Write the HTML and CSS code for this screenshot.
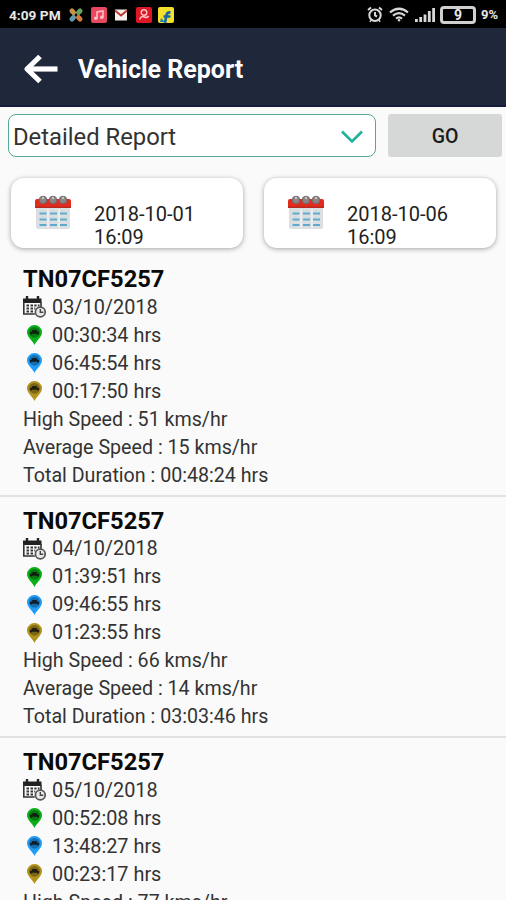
FILE: index.html
```html
<!DOCTYPE html>
<html lang="en">
<head>
    <meta charset="UTF-8">
    <meta name="viewport" content="width=device-width, initial-scale=1.0">
    <title>Vehicle Report</title>
    <link rel="stylesheet" href="styles.css">
</head>
<body>
    <!-- Shared icons -->
    <svg class="sprite" width="0" height="0">
        <defs>
            <symbol id="calendar" viewBox="0 0 36 36">
                <path d="M1 13h34v19q0 2-2 2H3q-2 0-2-2z" fill="#dcdfe2"/>
                <path d="M13 14v19M24 14v19" stroke="#eef1f3" stroke-width="1.5"/>
                <path d="M0 6q0-2 2-2h32q2 0 2 2v7H0z" fill="#e32b1c"/>
                <path d="M0 11.500h36v1.500H0z" fill="#b82a20"/>
                <g fill="#8d8385" stroke="#6f696c"><circle cx="8" cy="5" r="3.800"/><circle cx="18" cy="5" r="3.800"/><circle cx="28" cy="5" r="3.800"/></g>
                <g fill="#c9c4c6"><circle cx="8" cy="3" r="1.200"/><circle cx="18" cy="3" r="1.200"/><circle cx="28" cy="3" r="1.200"/></g>
                <path d="M4.500 18.500h7M15 18.500h7M25 18.500h7M4.500 24.500h7M15 24.500h7M25 24.500h7M4.500 30h7M15 30h7M25 30h7" stroke="#5fa9cc" stroke-width="2"/>
                <path d="M6 17h4M16 17h4M26 17h4M6 23h4M16 23h4M26 23h4" stroke="#a8d8dc"/>
            </symbol>
            <symbol id="schedule" viewBox="0 0 23 22">
                <path d="M0 2.500h18.500V7H0z" fill="#222"/>
                <path d="M4 0v4M15 0v4" stroke="#222" stroke-width="2.400"/>
                <path d="M.8 6v12h11M18 6v5" fill="none" stroke="#333" stroke-width="1.600"/>
                <path d="M3.500 9.500h2.500M7.500 9.500h2.500M11.300 9.500h2.200M14.800 9.500h1.700M3.500 12.500h2.500M7.500 12.500h2.500M11.300 12.500h1M3.500 15.500h2.500M7.500 15.500h2.500" stroke="#333" stroke-width="2"/>
                <circle cx="17.300" cy="16" r="4.900" fill="#e9e9e9" stroke="#555" stroke-width="1.700"/>
                <path d="M17.300 13v3.300h3" fill="none" stroke="#444" stroke-width="1.400"/>
            </symbol>
            <symbol id="pin" viewBox="0 0 16 20">
                <path d="M8 20C6 15.500.5 12 .5 7.300a7.500 7.300 0 0 1 15 0C15.500 12 10 15.500 8 20z" fill="currentColor"/>
                <circle cx="8" cy="7.300" r="5.400" fill="#000" opacity=".3"/>
                <path d="M3.500 9.500V7.300L5 6.800 6 5h4l1 1.800 1.500.5v2.200h-1.700v-.8H5.200v.8z" fill="#111" opacity=".85"/>
            </symbol>
        </defs>
    </svg>

    <div class="screen">
        <div class="statusbar">
            <span class="clock">4:09 PM</span>
            <div class="apps">
                <svg width="16" height="16" viewBox="0 0 16 16">
                    <g stroke-width="5" stroke-linecap="round">
                        <path d="M4 4l1.500 1.500" stroke="#c8924a"/><path d="M12 4l-1.500 1.500" stroke="#68a35a"/>
                        <path d="M4 12l1.500-1.500" stroke="#5c9ab0"/><path d="M12 12l-1.500-1.500" stroke="#d57a3b"/>
                    </g>
                    <path d="M2 8h2M12 8h2M8 2v2M8 12v2" stroke="#000" stroke-width="1.500"/>
                </svg>
                <svg width="16" height="16" viewBox="0 0 16 16">
                    <rect width="16" height="16" rx="2" fill="#e8475f"/>
                    <path d="M6 11V5l6-1v6" fill="none" stroke="#ffc2c8" stroke-width="1.500"/>
                    <circle cx="4.800" cy="11.200" r="1.800" fill="#ffc2c8"/><circle cx="10.800" cy="10.200" r="1.800" fill="#ffc2c8"/>
                </svg>
                <svg width="16" height="16" viewBox="0 0 16 16">
                    <rect x="2" y="2.500" width="12" height="11" fill="#f5efed"/>
                    <path d="M2 3.500l6 5 6-5" fill="none" stroke="#b93730" stroke-width="1.800"/>
                </svg>
                <svg width="16" height="16" viewBox="0 0 16 16">
                    <rect width="16" height="16" rx="2" fill="#df1724"/>
                    <circle cx="8" cy="5.500" r="2.800" fill="none" stroke="#ffc6c8" stroke-width="1.400"/>
                    <path d="M3.500 12.500q2-4 5-2.500 2.500 1.500 4-1" fill="none" stroke="#ffc6c8" stroke-width="1.500"/>
                </svg>
                <svg width="16" height="16" viewBox="0 0 16 16">
                    <rect width="16" height="16" rx="2" fill="#f5e02c"/>
                    <path d="M7 16l1.500-8q.7-3 4-2.500M5.500 9.500h7" fill="none" stroke="#1767a8" stroke-width="2.600"/>
                    <path d="M3 11l4 4H2z" fill="#1d83b5"/>
                </svg>
            </div>
            <div class="indicators">
                <svg width="16" height="17" viewBox="0 0 16 17" fill="none" stroke="#d8d8d8" stroke-width="2">
                    <circle cx="8" cy="9.200" r="5.700"/>
                    <path d="M8 6v3.500l2 1M1 4l3-2.500M15 4l-3-2.500"/>
                    <path d="M4 14l-1 2M12 14l1 2" stroke-width="1.500"/>
                </svg>
                <svg width="20" height="15" viewBox="0 0 20 15" fill="none" stroke="#d8d8d8" stroke-width="2.200">
                    <path d="M1 5.500Q10-2 19 5.500"/><path d="M4 8.700q6-5 12 0"/><path d="M7 11.700q3-2.500 6 0"/>
                    <circle cx="10" cy="13.300" r="1.200" fill="#d8d8d8" stroke="none"/>
                </svg>
                <svg width="20" height="15" viewBox="0 0 20 15" fill="#d8d8d8">
                    <path d="M0 12h2.800v3H0zM4.300 10h2.800v5H4.300zM8.600 7.500h2.800V15H8.600zM12.900 4h2.800v11h-2.800zM17.200 1H20v14h-2.800z"/>
                </svg>
                <div class="battery">9</div>
                <span class="percent">9%</span>
            </div>
        </div>

        <div class="header">
            <svg width="35" height="30" viewBox="0 0 35 30" fill="none" stroke="#fff" stroke-width="5.200">
                <path d="M4 15h30.500"/><path d="M17 2.500L4 15l13 12.500" stroke-linejoin="round"/>
            </svg>
            <h1>Vehicle Report</h1>
        </div>

        <div class="filters">
            <div class="select">
                <span>Detailed Report</span>
                <svg width="24" height="14" viewBox="0 0 24 14" fill="none" stroke="#20b09c" stroke-width="2.600">
                    <path d="M2 1.500l10 10 10-10"/>
                </svg>
            </div>
            <button type="button" class="go">GO</button>
        </div>

        <div class="dates">
            <div class="date-card">
                <svg width="36" height="36"><use href="#calendar"/></svg>
                <span>2018-10-01 16:09</span>
            </div>
            <div class="date-card">
                <svg width="36" height="36"><use href="#calendar"/></svg>
                <span>2018-10-06 16:09</span>
            </div>
        </div>

        <!-- Report list -->
        <div class="record">
            <h2>TN07CF5257</h2>
            <div class="row"><svg width="23" height="22"><use href="#schedule"/></svg>03/10/2018</div>
            <div class="row"><svg class="green" width="23" height="20"><use href="#pin"/></svg>00:30:34 hrs</div>
            <div class="row"><svg class="blue" width="23" height="20"><use href="#pin"/></svg>06:45:54 hrs</div>
            <div class="row"><svg class="gold" width="23" height="20"><use href="#pin"/></svg>00:17:50 hrs</div>
            <div class="row stat">High Speed : 51 kms/hr</div>
            <div class="row stat">Average Speed : 15 kms/hr</div>
            <div class="row stat">Total Duration : 00:48:24 hrs</div>
        </div>
        <div class="record">
            <h2>TN07CF5257</h2>
            <div class="row"><svg width="23" height="22"><use href="#schedule"/></svg>04/10/2018</div>
            <div class="row"><svg class="green" width="23" height="20"><use href="#pin"/></svg>01:39:51 hrs</div>
            <div class="row"><svg class="blue" width="23" height="20"><use href="#pin"/></svg>09:46:55 hrs</div>
            <div class="row"><svg class="gold" width="23" height="20"><use href="#pin"/></svg>01:23:55 hrs</div>
            <div class="row stat">High Speed : 66 kms/hr</div>
            <div class="row stat">Average Speed : 14 kms/hr</div>
            <div class="row stat">Total Duration : 03:03:46 hrs</div>
        </div>
        <div class="record">
            <h2>TN07CF5257</h2>
            <div class="row"><svg width="23" height="22"><use href="#schedule"/></svg>05/10/2018</div>
            <div class="row"><svg class="green" width="23" height="20"><use href="#pin"/></svg>00:52:08 hrs</div>
            <div class="row"><svg class="blue" width="23" height="20"><use href="#pin"/></svg>13:48:27 hrs</div>
            <div class="row"><svg class="gold" width="23" height="20"><use href="#pin"/></svg>00:23:17 hrs</div>
            <div class="row stat">High Speed : 77 kms/hr</div>
        </div>
    </div>
</body>
</html>
```
FILE: styles.css
```css
* {
    box-sizing: border-box;
}
body {
    margin: 0;
    background-color: #fafafa;
    font-family: Roboto, sans-serif;
    color: #333;
}
h1, h2 {
    margin: 0;
}
svg {
    display: block;
    flex: none;
}
.sprite {
    display: none;
}
.screen {
    height: 900px;
    overflow: hidden;
}
.statusbar {
    display: flex;
    align-items: center;
    height: 28px;
    padding: 1px 8px 0 9px;
    background-color: #000;
    color: #e8e8e8;
}
.clock {
    width: 59px;
    font-size: 13.700px;
    font-weight: bold;
    white-space: nowrap;
}
.apps {
    display: flex;
    gap: 6.500px;
}
.indicators {
    display: flex;
    align-items: center;
    gap: 6px;
    margin-left: auto;
}
.indicators .battery {
    margin: 0 -1px 0 -1px;
}
.battery {
    width: 36px;
    height: 18px;
    border: 3px solid #d0d0d0;
    border-radius: 4px;
    font-size: 14px;
    font-weight: bold;
    line-height: 12px;
    text-align: center;
}
.percent {
    font-size: 13px;
    font-weight: bold;
}
.header {
    display: flex;
    align-items: center;
    gap: 20px;
    height: 79px;
    padding: 4px 23px 0;
    background-color: #1f273b;
    border-bottom: 2px solid #171b3a;
}
.header h1 {
    padding-top: 2px;
    color: #fff;
    font-size: 25px;
    line-height: 30px;
}
.filters {
    display: flex;
    gap: 12px;
    padding: 7px 4px 0 8px;
}
.select {
    display: flex;
    justify-content: space-between;
    align-items: center;
    width: 368px;
    height: 43px;
    padding: 2px 11px 0 4px;
    background-color: #fff;
    border: 1.500px solid #55a996;
    border-radius: 8px;
    font-size: 23.800px;
}
.go {
    flex: 1;
    height: 43px;
    padding: 2px 0 0;
    background-color: #d6d7d7;
    border: 0;
    border-radius: 3px;
    color: #1a1a1a;
    font-family: inherit;
    font-size: 19.500px;
    font-weight: 500;
}
.dates {
    display: flex;
    gap: 21px;
    padding: 21px 10px 0 11px;
}
.date-card {
    display: flex;
    gap: 23px;
    width: 232px;
    height: 70px;
    padding: 17px 24px 0;
    background-color: #fff;
    border-radius: 13px;
    box-shadow: 0 1px 5px rgba(0, 0, 0, 0.35);
    color: #222;
    font-size: 20px;
    line-height: 23px;
}
.date-card span {
    width: 110px;
    padding-top: 8px;
}
.record {
    height: 241.500px;
    padding: 10px 23px 0;
    border-bottom: 2px solid #e2e2e2;
}
.dates + .record {
    margin-top: 7px;
}
.record h2 {
    color: #0a0a0a;
    font-size: 23.700px;
    line-height: 28px;
}
.row {
    display: flex;
    align-items: center;
    gap: 6px;
    height: 28px;
    font-size: 19.850px;
    white-space: nowrap;
}
.stat {
    font-size: 19.650px;
}
.green {
    color: #0aae18;
}
.blue {
    color: #1f9cf8;
}
.gold {
    color: #b0921c;
}
```
